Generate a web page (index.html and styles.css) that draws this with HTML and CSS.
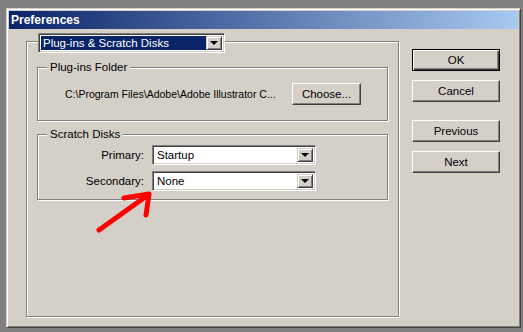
FILE: index.html
```html
<!DOCTYPE html>
<html>
<head>
    <title>Preferences</title>
    <link rel="stylesheet" href="styles.css">
</head>
<body>
    <div class="window">
        <div class="titlebar">Preferences</div>
        <div class="client">
            <div class="panel">
                <div class="combo combo-focus panel-combo">
                    <span class="combo-text">Plug-ins &amp; Scratch Disks</span>
                    <span class="combo-btn"><span class="tri"></span></span>
                </div>

                <div class="group folder">
                    <div class="group-label">Plug-ins Folder</div>
                    <div class="folder-row">
                        <span class="path">C:\Program Files\Adobe\Adobe Illustrator C...</span>
                        <button class="btn choose">Choose...</button>
                    </div>
                </div>

                <div class="group scratch">
                    <div class="group-label">Scratch Disks</div>
                    <div class="field">
                        <label>Primary:</label>
                        <div class="combo field-combo">
                            <span class="combo-text">Startup</span>
                            <span class="combo-btn"><span class="tri"></span></span>
                        </div>
                    </div>
                    <div class="field">
                        <label>Secondary:</label>
                        <div class="combo field-combo">
                            <span class="combo-text">None</span>
                            <span class="combo-btn"><span class="tri"></span></span>
                        </div>
                    </div>
                </div>
            </div>

            <div class="buttons">
                <button class="btn btn-default">OK</button>
                <button class="btn">Cancel</button>
                <button class="btn gap">Previous</button>
                <button class="btn">Next</button>
            </div>
        </div>

        <!-- red annotation arrow drawn over the dialog -->
        <svg class="arrow" width="523" height="332" viewBox="0 0 523 332">
            <g fill="none" stroke="#ff0000" stroke-width="5" stroke-linecap="round" stroke-linejoin="round">
                <path d="M99 230 L148 195"/>
                <path d="M124 198 L149 194 L146 215"/>
            </g>
        </svg>
    </div>
</body>
</html>
```

FILE: styles.css
```css
body {
    margin: 0;
    height: 332px;
    overflow: hidden;
    background-color: #808080;
    font-family: "Liberation Sans", Arial, sans-serif;
    font-size: 11.5px;
    color: #000;
}
.window {
    width: 515px;
    height: 320px;
    margin: 8px 0 0 6px;
    box-sizing: border-box;
    padding: 2px;
    background: #d4d0c8;
    border: 1px solid;
    border-color: #d4d0c8 #404040 #404040 #d4d0c8;
    box-shadow: inset 1px 1px 0 #fff, inset -1px -1px 0 #808080;
    display: flex;
    flex-direction: column;
}
.titlebar {
    height: 18px;
    line-height: 18px;
    padding-left: 2px;
    color: #fff;
    font-weight: bold;
    font-size: 12px;
    background: linear-gradient(to right, #0a246a, #a6caf0);
}
.client {
    display: flex;
    align-items: flex-start;
}
.panel {
    width: 373px;
    height: 276px;
    box-sizing: border-box;
    margin: 12px 0 0 17px;
    padding: 0 10px;
    border: 1px solid #808080;
    box-shadow: 1px 1px 0 #fff, inset 1px 1px 0 #fff;
}

/* combo boxes */
.combo {
    display: flex;
    box-sizing: border-box;
    height: 20px;
    padding: 2px;
    background: #fff;
    border: 1px solid;
    border-color: #808080 #fff #fff #808080;
    box-shadow: inset 1px 1px 0 #404040, inset -1px -1px 0 #d4d0c8;
}
.combo-text {
    flex: 1;
    line-height: 15px;
    padding-left: 2px;
}
.combo-focus .combo-text {
    background: #0a246a;
    color: #fff;
}
.combo-btn {
    width: 16px;
    box-sizing: border-box;
    background: #d4d0c8;
    border: 1px solid;
    border-color: #d4d0c8 #404040 #404040 #d4d0c8;
    box-shadow: inset 1px 1px 0 #fff, inset -1px -1px 0 #808080;
    display: flex;
    align-items: center;
    justify-content: center;
}
.tri {
    width: 0;
    height: 0;
    border-left: 4px solid transparent;
    border-right: 4px solid transparent;
    border-top: 4px solid #000;
}
.panel-combo {
    width: 187px;
    margin: -9px 0 0 1px;
}

/* etched group boxes */
.group {
    box-sizing: border-box;
    border: 1px solid #808080;
    box-shadow: 1px 1px 0 #fff, inset 1px 1px 0 #fff;
}
.group-label {
    width: fit-content;
    background: #d4d0c8;
    margin: -7px 0 0 9px;
    padding: 0 3px;
    line-height: 13px;
}
.folder {
    margin-top: 14px;
    height: 54px;
}
.folder-row {
    display: flex;
    align-items: center;
    justify-content: space-between;
    padding: 9px 26px 0 27px;
}
.path {
    font-size: 10.5px;
}
.scratch {
    margin-top: 13px;
    height: 66px;
}
.field {
    display: flex;
    align-items: center;
    margin-top: 4px;
}
.field + .field {
    margin-top: 6px;
}
.field label {
    width: 106px;
    text-align: right;
}
.field-combo {
    width: 164px;
    margin-left: 8px;
}

/* push buttons */
.btn {
    display: block;
    box-sizing: border-box;
    height: 22px;
    padding: 0;
    font-family: inherit;
    font-size: 11.5px;
    background: #d4d0c8;
    color: #000;
    border: 1px solid;
    border-color: #fff #404040 #404040 #fff;
    box-shadow: inset -1px -1px 0 #808080;
}
.choose {
    width: 69px;
    height: 22px;
}
.buttons {
    display: flex;
    flex-direction: column;
    gap: 9px;
    margin: 20px 0 0 13px;
}
.buttons .btn {
    width: 88px;
}
.btn-default {
    border: 1px solid #000;
    box-shadow: inset 1px 1px 0 #fff, inset -1px -1px 0 #404040, inset -2px -2px 0 #808080;
}
.buttons .gap {
    margin-top: 9px;
}
.arrow {
    position: absolute;
    left: 0;
    top: 0;
    pointer-events: none;
}
```
